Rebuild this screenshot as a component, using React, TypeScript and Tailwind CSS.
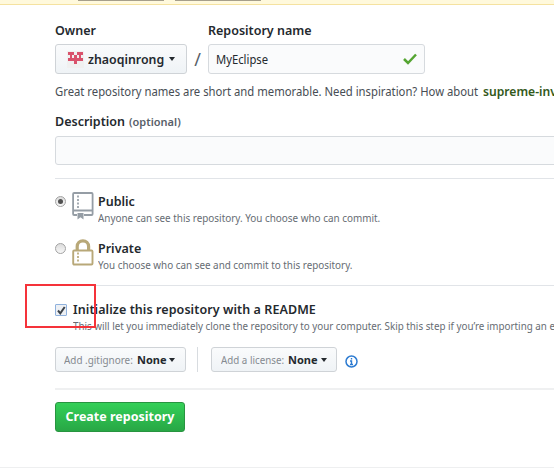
import React from "react";

function Caret() {
  return <span className="h-0 w-0 shrink-0 border-x-[3.5px] border-t-4 border-x-transparent border-t-[#24292e]" />;
}

function RepoIcon() {
  return (
    <svg width="22" height="28" viewBox="0 0 22 28" className="block shrink-0" fill="none" stroke="#959da5" strokeWidth="1.8">
      <path d="M1.100 22V2q0-1 1-1h17.500q1 0 1 1v20q0 1-1 1H12M1.100 18.500h19.500M1.100 22q0 1 1 1H5" />
      <path d="M6 3.500v2M6 7v2M6 10.500v2M6 14v2" strokeWidth="1.700" />
      <path d="M5.500 21h6v6.500l-3-2.200-3 2.200z" fill="#959da5" stroke="none" />
    </svg>
  );
}

function LockIcon() {
  return (
    <svg width="22" height="28" viewBox="0 0 22 28" className="block shrink-0" fill="none" stroke="#b8a878">
      <path d="M5.200 11.500V7.500a5.700 5.700 0 0 1 11.400 0v4" strokeWidth="3.200" />
      <rect x="1.200" y="11.500" width="19.300" height="14" rx="1" strokeWidth="1.900" />
      <path d="M6 13.500v2M6 17v2M6 20.500v2" strokeWidth="1.700" />
    </svg>
  );
}

function Radio({ on }: { on?: boolean }) {
  return (
    <span className="mt-[5px] flex h-[11px] w-[11px] shrink-0 items-center justify-center rounded-full border border-[#a3a3a3] bg-linear-to-b from-[#dcdcdc] to-[#f7f7f7]">
      {on && <span className="h-[5px] w-[5px] rounded-full bg-[#505050]" />}
    </span>
  );
}

const button = "flex items-center rounded-[3px] border border-[#cfd3d7] bg-linear-to-b from-[#fafbfc] to-[#eff3f6]";

export default function App() {
  return (
    <div className="relative h-[472px] w-[554px] overflow-hidden whitespace-nowrap bg-white font-['Noto_Sans','Open_Sans',sans-serif] text-[13px] leading-[18px] text-[#24292e]">
      <div className="flex h-[5px] gap-[11px] border-b border-[#f5e2a0] bg-[#fff9dc] pl-[78px]">
        <span className="h-px w-[86px] bg-[#a69f8b]" />
        <span className="h-px w-[86px] bg-[#a69f8b]" />
      </div>

      <main className="ml-[55px] w-[520px]">
        <div className="flex h-[39px] items-end pb-[4px] text-[12.5px] font-semibold">
          <span className="w-[153px]">Owner</span>
          <span>Repository name</span>
        </div>
        <div className="flex h-[30px]">
          <div className={`${button} w-[132px] pl-[11px]`}>
            <svg width="17" height="17" viewBox="0 0 17 17" className="mr-[4px]" shapeRendering="crispEdges">
              <path fill="#f0f0f0" d="M0 0h17v17H0z" />
              <path fill="#d9526c" d="M1 1h6v3H5v3h2V4h3v3h2V4h-2V1h6v3h-2v3h2v3h-6v3H7v-3H1V7h2V4H1z" />
            </svg>
            <span className="mr-[6px] w-[75px]"><span className="inline-block origin-left scale-x-[.95] font-semibold">zhaoqinrong</span></span>
            <Caret />
          </div>
          <span className="w-[21px] pt-[6px] text-center text-[18px] text-[#586069]">/</span>
          <div className="flex w-[217px] items-center justify-between rounded-[3px] border border-[#d6dade] bg-[#fafbfc] pr-[7px] pl-[7px]">
            <span className="inline-block origin-left scale-x-[.9] pt-px text-[12.5px]">MyEclipse</span>
            <svg width="14" height="12" viewBox="0 0 14 12" fill="none" stroke="#55a532" strokeWidth="2.500"><path d="m1 6 4 4 8-8.500" /></svg>
          </div>
        </div>
        <p className="mt-[9px] flex h-[17px] text-[12.5px] text-[#474d54]">
          <span className="w-[428px]"><span className="inline-block origin-left scale-x-[.903]">Great repository names are short and memorable. Need inspiration? How about</span></span>
          <strong className="origin-left scale-x-[.97] font-semibold text-[#33591a]">supreme-invention.</strong>
        </p>
        <div className="mt-[13px] flex h-[18px] items-center text-[12.500px] font-semibold">
          <span className="w-[74px]">Description</span>
          <span className="text-[11px] text-[#586069]">(optional)</span>
        </div>
        <div className="mt-[5px] h-[29px] rounded-[3px] border border-[#d6dade] bg-[#fafbfc]" />

        <section className="mt-[13px] h-[108px] border-y border-[#e1e4e8] pt-[12px]">
          <div className="flex h-[47px]">
            <Radio on />
            <span className="mt-px ml-[6px] w-[26px]"><RepoIcon /></span>
            <div className="text-[11px] leading-[16px] text-[#666c73]">
              <b className="block h-[19px] text-[12.5px] leading-[21px] font-semibold text-[#24292e]">Public</b>
              <span className="inline-block origin-left scale-x-[.9]">Anyone can see this repository. You choose who can commit.</span>
            </div>
          </div>
          <div className="flex">
            <Radio />
            <span className="mt-px ml-[6px] w-[26px]"><LockIcon /></span>
            <div className="text-[11px] leading-[16px] text-[#666c73]">
              <b className="block h-[19px] text-[12.5px] leading-[21px] font-semibold text-[#24292e]">Private</b>
              <span className="inline-block origin-left scale-x-[.897]">You choose who can see and commit to this repository.</span>
            </div>
          </div>
        </section>

        <section className="flex pt-[15px]">
          <span className="mt-[3px] mr-[6px] flex h-[12px] w-[12px] shrink-0 items-center justify-center rounded-[1px] border border-[#8fb1dd] bg-[#edf0f4]">
            <svg width="9" height="9" viewBox="0 0 9 9" fill="none" stroke="#3d434a" strokeWidth="2"><path d="m1 4.500 2.300 2.800L7.700 1" /></svg>
          </span>
          <div className="text-[11px] leading-[14px] text-[#666c73]">
            <b className="block h-[18px] text-[12.5px] leading-[18px] font-semibold tracking-[0.08px] text-[#24292e]">Initialize this repository with a README</b>
            <span className="inline-block origin-left scale-x-[.892]">This will let you immediately clone the repository to your computer. Skip this step if you’re importing an existing repository.</span>
          </div>
        </section>
        <div className="mt-[14px] flex h-[26px] text-[11px]">
          <div className={`${button} h-[25px] w-[131px] pl-[8px]`}>
            <span className="w-[73px] text-[#858a90]"><span className="inline-block origin-left scale-x-[.9]">Add .gitignore:</span></span>
            <b className="mr-[3px] w-[29px]">None</b><Caret />
          </div>
          <span className="mr-[13px] ml-[11px] h-[25px] w-px bg-[#d8dce0]" />
          <div className={`${button} h-[25px] w-[126px] pl-[9px]`}>
            <span className="w-[67px] text-[#858a90]"><span className="inline-block origin-left scale-x-[.89]">Add a license:</span></span>
            <b className="mr-[4px] w-[29px]">None</b><Caret />
          </div>
          <svg width="13" height="13" viewBox="0 0 13 13" className="mt-[8px] ml-[8px]" fill="none" stroke="#2d7bd1">
            <circle cx="6.500" cy="6.500" r="5.500" strokeWidth="1.500" />
            <path d="M6.500 3v1.500M5 6h1.500v3.500M5 9.500h3" strokeWidth="1.400" />
          </svg>
        </div>
        <div className="mt-[15px] h-[2px] bg-[#eff0f1]" />
        <button className="mt-[12px] flex h-[30px] w-[130px] items-center justify-center rounded-[3px] border border-[#289440] bg-linear-to-b from-[#34d058] to-[#28a745] text-[12.5px] font-bold text-white">Create repository</button>
      </main>
      <div className="mt-[35px] h-px bg-[#eeeff0]" />
      <div className="absolute top-[284px] left-[25px] h-[44px] w-[71px] border-2 border-[#f5333a]" />
    </div>
  );
}
